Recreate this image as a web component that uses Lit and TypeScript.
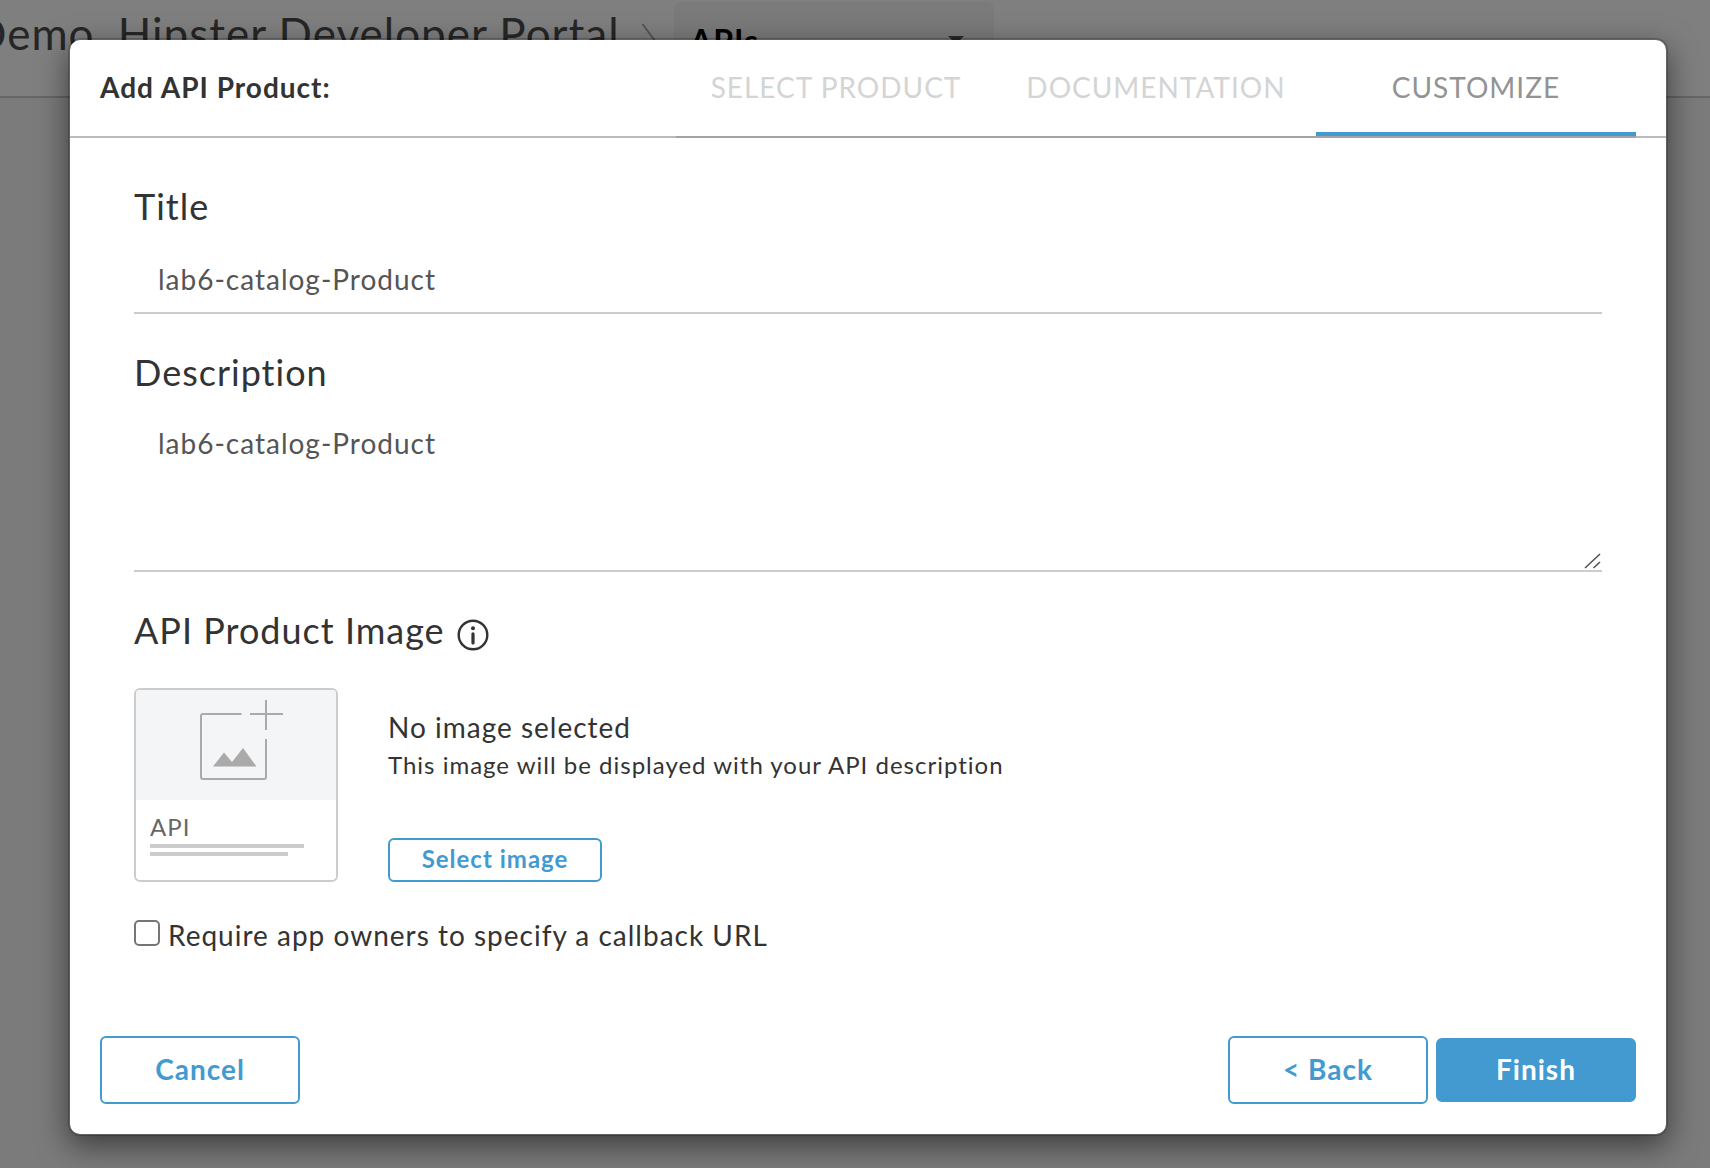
import { LitElement, html, css, svg } from "lit";
import { customElement, state } from "lit/decorators.js";
import { classMap } from "lit/directives/class-map.js";

const infoIcon = svg`
  <svg class="info" viewBox="0 0 32 32" width="32" height="32" fill="none">
    <circle cx="16" cy="16" r="14.3" stroke="#333" stroke-width="2.4" />
    <circle cx="16" cy="9.3" r="2" fill="#333" />
    <path d="M16 14.8V24" stroke="#333" stroke-width="3.2" stroke-linecap="round" />
  </svg>`;

const addImageIcon = svg`
  <svg viewBox="0 0 84 82" width="84" height="82" fill="none" stroke="#aaa" stroke-width="2">
    <path d="M42.5 15H4a2 2 0 0 0-2 2V78a2 2 0 0 0 2 2H65a2 2 0 0 0 2-2V40" />
    <path d="M51 15H84M67 1V31" />
    <path d="M14 67.5L25 53.5L33 63L44 49L57.5 67.5Z" fill="#aaa" stroke="none" />
  </svg>`;

@customElement("app-root")
export class AppRoot extends LitElement {
  static styles = css`
    :host {
      display: block;
      font-family: Lato, "Liberation Sans", sans-serif;
      font-size: 28px;
      letter-spacing: 1px;
      color: #333;
    }
    * { box-sizing: border-box; }
    .page {
      height: 1168px;
      overflow: hidden;
      background: #f7f7f7;
    }
    .topbar {
      display: flex;
      align-items: flex-start;
      height: 98px;
      background: #fff;
      border-bottom: 2px solid #ccc;
      white-space: nowrap;
      overflow: hidden;
    }
    .crumb {
      flex: none;
      margin-left: -27px;
      width: 668px;
      padding-top: 3px;
      font-size: 44px;
      line-height: 60px;
      letter-spacing: 1px;
      color: #4d4d4d;
    }
    .sep { flex: none; margin: 23px 13px 0 0; }
    .switcher {
      display: flex;
      justify-content: space-between;
      align-items: center;
      width: 320px;
      height: 76px;
      margin-top: 2px;
      padding: 0 30px 0 16px;
      border-radius: 8px;
      background: #f4f4f4;
      color: #000;
      font-size: 32px;
      font-weight: 700;
    }
    .caret {
      border: 8px solid transparent;
      border-top-color: #555;
      border-bottom: 0;
    }
    .backdrop {
      position: absolute;
      inset: 0;
      height: 1168px;
      padding: 38px 0 0 68px;
      background: rgba(0, 0, 0, 0.5);
      overflow: hidden;
    }
    .modal {
      display: flex;
      flex-direction: column;
      width: 1600px;
      height: 1098px;
      border: 2px solid rgba(0, 0, 0, 0.2);
      border-radius: 12px;
      background: #fff;
      background-clip: padding-box;
      box-shadow: 0 10px 30px rgba(0, 0, 0, 0.5);
    }
    .head {
      display: flex;
      justify-content: space-between;
      height: 98px;
      padding: 0 30px;
      border-bottom: 2px solid #bbb;
    }
    .heading {
      margin: 0;
      font-size: 28px;
      line-height: 94px;
      font-weight: 700;
    }
    .tabs {
      display: flex;
      height: 98px;
      border-bottom: 2px solid #a3a3a3;
    }
    .tab {
      width: 320px;
      height: 96px;
      text-align: center;
      line-height: 94px;
      color: #d4d4d4;
    }
    .tab.active {
      color: #939393;
      border-bottom: 4px solid #439ad0;
    }
    .body {
      flex: 1;
      display: flex;
      flex-direction: column;
      padding: 46px 64px 0;
    }
    .label {
      display: flex;
      align-items: center;
      gap: 12px;
      height: 44px;
      font-size: 36px;
      line-height: 44px;
      font-variant-ligatures: none;
    }
    .info { position: relative; top: 5px; }
    .field {
      display: block;
      width: 100%;
      border: 0;
      border-bottom: 2px solid #ccc;
      outline: 0;
      background: transparent;
      padding: 0 24px;
      font: inherit;
      letter-spacing: inherit;
      color: #555;
    }
    .line { height: 67px; margin: 19px 0 36px; padding-bottom: 1px; }
    .area-wrap {
      display: grid;
      margin: 20px 0 36px;
    }
    .area {
      grid-area: 1 / 1;
      height: 158px;
      padding-top: 12px;
      line-height: 34px;
      resize: none;
    }
    .grip { grid-area: 1 / 1; place-self: end; margin: 0 1px 3px 0; }
    .media { display: flex; gap: 50px; margin-top: 36px; height: 194px; }
    .card {
      display: flex;
      flex-direction: column;
      width: 204px;
      height: 194px;
      border: 2px solid #ccc;
      border-radius: 6px;
      overflow: hidden;
    }
    .thumb {
      display: flex;
      height: 110px;
      padding: 9px 0 0 63px;
      background: #f4f5f7;
    }
    .caption { padding: 13px 14px 0; font-size: 24px; line-height: 28px; color: #666; }
    .bar { height: 4px; margin-top: 4px; background: #ccc; }
    .bar.first { width: 154px; margin-top: 3px; }
    .bar.second { width: 138px; }
    .details { display: flex; flex-direction: column; align-items: flex-start; }
    .status { margin-top: 19px; line-height: 40px; }
    .hint { font-size: 24px; line-height: 35px; }
    button {
      font: inherit;
      letter-spacing: inherit;
      font-weight: 700;
      padding: 0 0 2px;
      border: 2px solid #439ad0;
      border-radius: 6px;
      background: #fff;
      color: #439ad0;
    }
    .select { width: 214px; height: 44px; margin-top: auto; font-size: 24px; line-height: 38px; }
    .check { display: flex; align-items: center; gap: 8px; margin-top: 35px; height: 36px; }
    .box {
      appearance: none;
      flex: none;
      width: 26px;
      height: 26px;
      margin: -4px 0 0;
      border: 2px solid #767676;
      border-radius: 5px;
      background: #fff;
    }
    .foot {
      display: flex;
      align-items: center;
      gap: 8px;
      height: 68px;
      margin: 0 30px 30px;
    }
    .btn { width: 200px; height: 68px; }
    .cancel { margin-right: auto; }
    .primary { height: 64px; background: #439ad0; color: #fff; }
  `;

  @state() private step = "CUSTOMIZE";
  @state() private name = "lab6-catalog-Product";
  @state() private description = "lab6-catalog-Product";

  private tabs = ["SELECT PRODUCT", "DOCUMENTATION", "CUSTOMIZE"];

  render() {
    return html`
      <div class="page">
        <div class="topbar">
          <div class="crumb">Demo, Hipster Developer Portal</div>
          <svg class="sep" width="20" height="48" viewBox="0 0 20 48" fill="none" stroke="#aaa" stroke-width="2">
            <path d="M1.5 1L18.5 24L1.5 47" />
          </svg>
          <div class="switcher"><span>APIs</span><span class="caret"></span></div>
        </div>
      </div>
      <div class="backdrop">
        <div class="modal">
          <div class="head">
            <h2 class="heading">Add API Product:</h2>
            <div class="tabs">
              ${this.tabs.map((t) => html`<div class=${classMap({ tab: true, active: t === this.step })}>${t}</div>`)}
            </div>
          </div>
          <div class="body">
            <div class="label">Title</div>
            <input class="field line" .value=${this.name} />
            <div class="label">Description</div>
            <div class="area-wrap">
              <textarea class="field area" .value=${this.description}></textarea>
              <svg class="grip" width="17" height="16" viewBox="0 0 17 16" stroke="#555" stroke-width="1.6">
                <path d="M1 15L16 1M9.5 15L16 9" />
              </svg>
            </div>
            <div class="label">API Product Image ${infoIcon}</div>
            <div class="media">
              <div class="card">
                <div class="thumb">${addImageIcon}</div>
                <div class="caption">
                  API
                  <div class="bar first"></div>
                  <div class="bar second"></div>
                </div>
              </div>
              <div class="details">
                <div class="status">No image selected</div>
                <div class="hint">This image will be displayed with your API description</div>
                <button class="select">Select image</button>
              </div>
            </div>
            <label class="check"><input class="box" type="checkbox" />Require app owners to specify a callback URL</label>
          </div>
          <div class="foot">
            <button class="btn cancel">Cancel</button>
            <button class="btn">&lt; Back</button>
            <button class="btn primary">Finish</button>
          </div>
        </div>
      </div>
    `;
  }
}
